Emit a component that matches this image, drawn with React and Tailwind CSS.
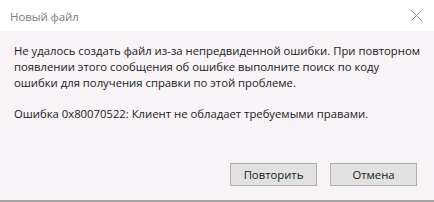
export default function App() {
    return (
        <div className="w-[434px] h-[202px] flex flex-col bg-[#f7f3f6] font-['Open_Sans',sans-serif] text-[#1a1a1a] overflow-hidden">
            {/* title bar */}
            <div className="h-[31px] bg-white flex items-center justify-between pl-[10px] pr-[12px]">
                <span className="text-[11.5px] text-[#808080] tracking-[-0.1px] pt-[2px]">Новый файл</span>
                <svg width="11" height="11" viewBox="0 0 11 11" className="text-[#8a8a8a]">
                    <path d="M0.5 0.5 L10.5 10.5 M10.5 0.5 L0.5 10.5" stroke="currentColor" strokeWidth="1" />
                </svg>
            </div>

            {/* message */}
            <div className="flex-1 flex flex-col px-[14px] pt-[12px] text-[11.3px] leading-[16px]">
                <p className="whitespace-nowrap">
                    Не удалось создать файл из-за непредвиденной ошибки. При повторном
                    <br />
                    появлении этого сообщения об ошибке выполните поиск по коду
                    <br />
                    ошибки для получения справки по этой проблеме.
                </p>
                <p className="mt-[15px] whitespace-nowrap">Ошибка 0x80070522: Клиент не обладает требуемыми правами.</p>

                <div className="mt-auto mb-[14px] flex justify-end gap-[13px] pr-[3px]">
                    <button className="w-[87px] h-[23px] bg-[#e1e1e1] border border-[#adadad] text-[11.3px]">
                        Повторить
                    </button>
                    <button className="w-[87px] h-[23px] bg-[#e1e1e1] border border-[#adadad] text-[11.3px]">
                        Отмена
                    </button>
                </div>
            </div>
            <div className="h-[2px] bg-[#a3a3a3]" />
        </div>
    );
}
